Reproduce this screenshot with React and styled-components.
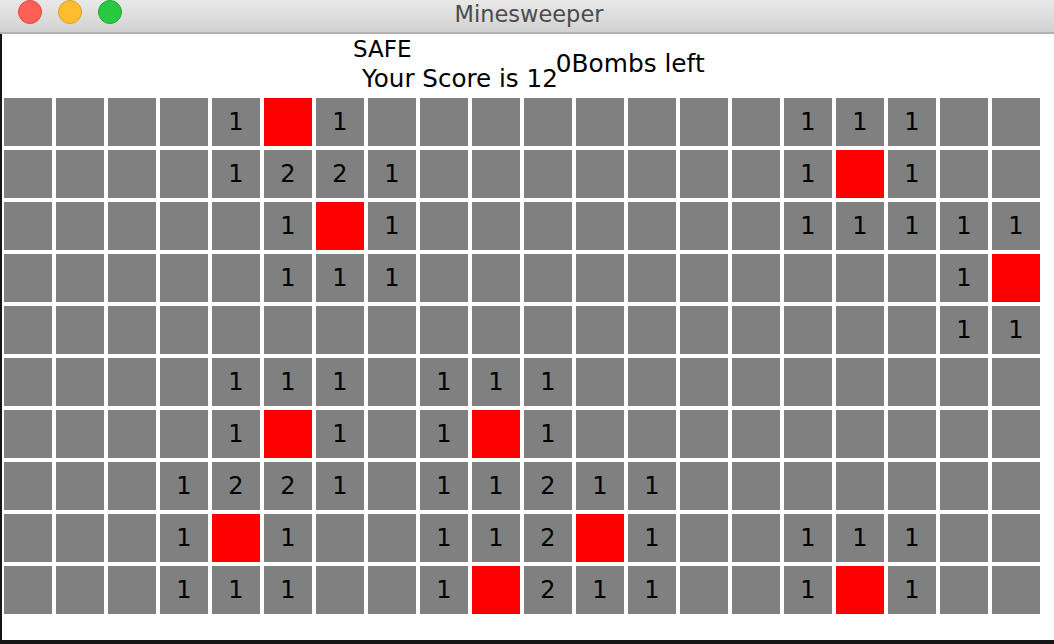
import styled, { createGlobalStyle } from 'styled-components';

const GlobalStyle = createGlobalStyle`
  html, body {
    margin: 0;
    padding: 0;
    background: #161616;
  }
  body {
    font-family: "DejaVu Sans", "Liberation Sans", sans-serif;
  }
`;

// 0 = empty, 9 = mine (red), else number
const BOARD = [
  [0, 0, 0, 0, 1, 9, 1, 0, 0, 0, 0, 0, 0, 0, 0, 1, 1, 1, 0, 0],
  [0, 0, 0, 0, 1, 2, 2, 1, 0, 0, 0, 0, 0, 0, 0, 1, 9, 1, 0, 0],
  [0, 0, 0, 0, 0, 1, 9, 1, 0, 0, 0, 0, 0, 0, 0, 1, 1, 1, 1, 1],
  [0, 0, 0, 0, 0, 1, 1, 1, 0, 0, 0, 0, 0, 0, 0, 0, 0, 0, 1, 9],
  [0, 0, 0, 0, 0, 0, 0, 0, 0, 0, 0, 0, 0, 0, 0, 0, 0, 0, 1, 1],
  [0, 0, 0, 0, 1, 1, 1, 0, 1, 1, 1, 0, 0, 0, 0, 0, 0, 0, 0, 0],
  [0, 0, 0, 0, 1, 9, 1, 0, 1, 9, 1, 0, 0, 0, 0, 0, 0, 0, 0, 0],
  [0, 0, 0, 1, 2, 2, 1, 0, 1, 1, 2, 1, 1, 0, 0, 0, 0, 0, 0, 0],
  [0, 0, 0, 1, 9, 1, 0, 0, 1, 1, 2, 9, 1, 0, 0, 1, 1, 1, 0, 0],
  [0, 0, 0, 1, 1, 1, 0, 0, 1, 9, 2, 1, 1, 0, 0, 1, 9, 1, 0, 0],
];

const Window = styled.div`
  width: 1054px;
  height: 644px;
  display: flex;
  flex-direction: column;
  background: #161616;
  overflow: hidden;
`;

const TitleBar = styled.div`
  height: 32px;
  flex-shrink: 0;
  display: grid;
  grid-template-columns: 1fr auto 1fr;
  background: linear-gradient(#e9e9e9, #d2d2d2);
  border-bottom: 2px solid #b2b2b2;
`;

const Lights = styled.div`
  display: flex;
  gap: 16px;
  padding-left: 18px;
  align-items: flex-start;
`;

const Light = styled.span`
  width: 24px;
  height: 24px;
  border-radius: 50%;
  box-sizing: border-box;
  background: ${p => p.$fill};
  border: 1px solid ${p => p.$edge};
`;

const Title = styled.div`
  font-size: 22.5px;
  line-height: 29px;
  color: #4b4b4b;
  padding-left: 4px;
`;

const Content = styled.div`
  margin-left: 2px;
  height: 606px;
  background: #ffffff;
  display: flex;
  flex-direction: column;
`;

const Header = styled.div`
  height: 64px;
  box-sizing: border-box;
  padding: 4px 0 0 351px;
  display: flex;
  align-items: flex-start;
  color: #000;
`;

const Status = styled.div`
  display: flex;
  flex-direction: column;
`;

const Safe = styled.div`
  font-size: 23px;
  line-height: 23px;
`;

const Score = styled.div`
  font-size: 24.6px;
  line-height: 24px;
  margin-top: 6px;
  padding-left: 9px;
`;

const Bombs = styled.div`
  font-size: 24.8px;
  line-height: 24px;
  margin-top: 14px;
  margin-left: -2px;
`;

const Grid = styled.div`
  display: grid;
  grid-template-columns: repeat(20, 48px);
  grid-auto-rows: 48px;
  gap: 4px;
  padding-left: 2px;
`;

const Cell = styled.div`
  background: ${p => (p.$mine ? '#ff0000' : '#808080')};
  display: flex;
  align-items: center;
  justify-content: center;
  font-size: 24px;
  color: #000;
`;

export default function App() {
  return (
    <>
      <GlobalStyle />
      <Window>
        <TitleBar>
          <Lights>
            <Light $fill="#fe5f57" $edge="#e2463f" />
            <Light $fill="#febc2e" $edge="#dfa123" />
            <Light $fill="#29c840" $edge="#1dac2b" />
          </Lights>
          <Title>Minesweeper</Title>
          <div />
        </TitleBar>
        <Content>
          <Header>
            <Status>
              <Safe>SAFE</Safe>
              <Score>Your Score is 12</Score>
            </Status>
            <Bombs>0Bombs left</Bombs>
          </Header>
          <Grid>
            {BOARD.map((row, r) =>
              row.map((v, c) => (
                <Cell key={`${r}-${c}`} $mine={v === 9}>
                  {v > 0 && v < 9 ? v : ''}
                </Cell>
              ))
            )}
          </Grid>
        </Content>
      </Window>
    </>
  );
}
